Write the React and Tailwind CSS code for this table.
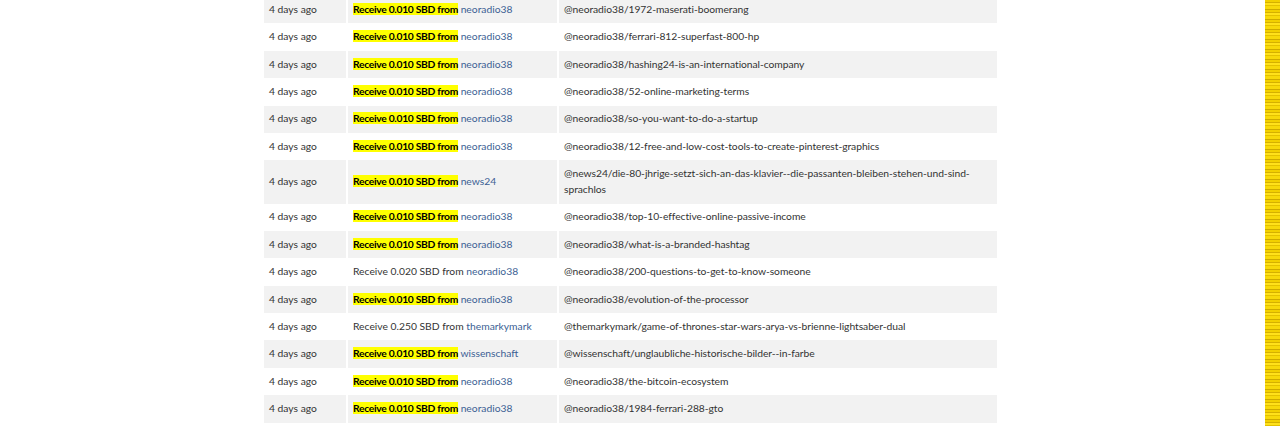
const rows = [
  { h: true, amt: "0.010", from: "neoradio38", memo: "@neoradio38/1972-maserati-boomerang" },
  { h: true, amt: "0.010", from: "neoradio38", memo: "@neoradio38/ferrari-812-superfast-800-hp" },
  { h: true, amt: "0.010", from: "neoradio38", memo: "@neoradio38/hashing24-is-an-international-company" },
  { h: true, amt: "0.010", from: "neoradio38", memo: "@neoradio38/52-online-marketing-terms" },
  { h: true, amt: "0.010", from: "neoradio38", memo: "@neoradio38/so-you-want-to-do-a-startup" },
  { h: true, amt: "0.010", from: "neoradio38", memo: "@neoradio38/12-free-and-low-cost-tools-to-create-pinterest-graphics" },
  { h: true, amt: "0.010", from: "news24", memo: "@news24/die-80-jhrige-setzt-sich-an-das-klavier--die-passanten-bleiben-stehen-und-sind-sprachlos" },
  { h: true, amt: "0.010", from: "neoradio38", memo: "@neoradio38/top-10-effective-online-passive-income" },
  { h: true, amt: "0.010", from: "neoradio38", memo: "@neoradio38/what-is-a-branded-hashtag" },
  { h: false, amt: "0.020", from: "neoradio38", memo: "@neoradio38/200-questions-to-get-to-know-someone" },
  { h: true, amt: "0.010", from: "neoradio38", memo: "@neoradio38/evolution-of-the-processor" },
  { h: false, amt: "0.250", from: "themarkymark", memo: "@themarkymark/game-of-thrones-star-wars-arya-vs-brienne-lightsaber-dual" },
  { h: true, amt: "0.010", from: "wissenschaft", memo: "@wissenschaft/unglaubliche-historische-bilder--in-farbe" },
  { h: true, amt: "0.010", from: "neoradio38", memo: "@neoradio38/the-bitcoin-ecosystem" },
  { h: true, amt: "0.010", from: "neoradio38", memo: "@neoradio38/1984-ferrari-288-gto" },
];

export default function App() {
  return (
    <div className="relative w-[1280px] h-[426px] overflow-hidden bg-white text-[#333333]" style={{ fontFamily: "Lato, 'Noto Sans', sans-serif" }}>
      <div className="flex h-full">
        <div className="flex-1">
          <div className="ml-[264px] w-[733px] -mt-[4px] flex flex-col text-[10.3px]">
            {rows.map((r, i) => (
              <div key={i} className={`flex gap-x-[2px] ${i % 2 === 0 ? "bg-[#f2f2f2]" : "bg-white"}`}>
                <div className="w-[82px] shrink-0 pl-[5px] py-[5.8px] leading-[15.8px] flex items-center">4 days ago</div>
                <div className="w-[2px] shrink-0 -mx-[2px] bg-white"></div>
                <div className="w-[209px] shrink-0 pl-[5px] py-[5.8px] leading-[15.8px] flex items-center">
                  <span>
                    {r.h ? (
                      <span className="bg-[#ffff00] font-bold text-black tracking-[-0.3px]">Receive {r.amt} SBD from</span>
                    ) : (
                      <span>Receive {r.amt} SBD from</span>
                    )}{" "}
                    <a className="text-[#3c5f94]">{r.from}</a>
                  </span>
                </div>
                <div className="w-[2px] shrink-0 -mx-[2px] bg-white"></div>
                <div className="flex-1 pl-[5px] pr-[12px] py-[5.8px] leading-[15.8px] tracking-[-0.05px] break-words">{r.memo}</div>
              </div>
            ))}
          </div>
        </div>
        <div className="w-[15px] h-full bg-[repeating-linear-gradient(180deg,#f2d000_0px,#f2d000_2px,#d4b000_2px,#d4b000_3px,#ffe11a_3px,#ffe11a_5px,#e3c100_5px,#e3c100_6px,#f7d90a_6px,#f7d90a_9px,#ceaa00_9px,#ceaa00_10px)]"></div>
      </div>
    </div>
  );
}
